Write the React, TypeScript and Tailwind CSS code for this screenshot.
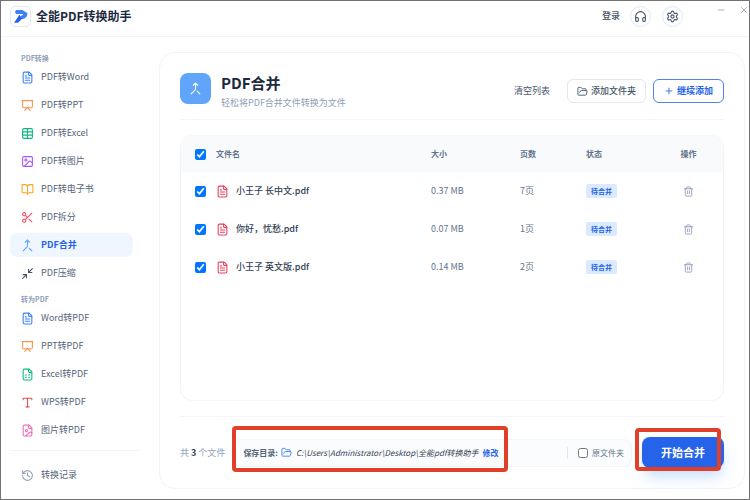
import {
  BookOpen,
  FileImage,
  FileSpreadsheet,
  FileText,
  FolderOpen,
  Headphones,
  History,
  Image as ImageIcon,
  Merge,
  Minimize2,
  Minus,
  Plus,
  Presentation,
  Scissors,
  Settings,
  Table,
  Trash2,
  Type,
  X,
  type LucideIcon,
} from 'lucide-react';

type NavItem = {
  label: string;
  icon: LucideIcon;
  color: string;
  active?: boolean;
};

const fromPdf: NavItem[] = [
  { label: 'PDF转Word', icon: FileText, color: 'text-[#3b82f6]' },
  { label: 'PDF转PPT', icon: Presentation, color: 'text-[#f59550]' },
  { label: 'PDF转Excel', icon: Table, color: 'text-[#10b981]' },
  { label: 'PDF转图片', icon: ImageIcon, color: 'text-[#a855f7]' },
  { label: 'PDF转电子书', icon: BookOpen, color: 'text-[#f5a623]' },
  { label: 'PDF拆分', icon: Scissors, color: 'text-[#f0546c]' },
  { label: 'PDF合并', icon: Merge, color: 'text-[#60a5fa]', active: true },
  { label: 'PDF压缩', icon: Minimize2, color: 'text-[#475569]' },
];

const toPdf: NavItem[] = [
  { label: 'Word转PDF', icon: FileText, color: 'text-[#3b82f6]' },
  { label: 'PPT转PDF', icon: Presentation, color: 'text-[#f59550]' },
  { label: 'Excel转PDF', icon: FileSpreadsheet, color: 'text-[#10b981]' },
  { label: 'WPS转PDF', icon: Type, color: 'text-[#e5534f]' },
  { label: '图片转PDF', icon: FileImage, color: 'text-[#ee6fb8]' },
];

const files = [
  { name: '小王子 长中文.pdf', size: '0.37 MB', pages: '7页' },
  { name: '你好，忧愁.pdf', size: '0.07 MB', pages: '1页' },
  { name: '小王子 英文版.pdf', size: '0.14 MB', pages: '2页' },
];

const Logo = () => (
  <span className="flex size-[21px] items-center justify-center rounded-[5px] border border-slate-200 bg-white">
    <svg viewBox="0 0 14 14" className="size-[15px]">
      <path d="M3 1H8.6L13.4 3.8C13.6 7.4 11.4 9.4 8.2 9.4H6.2L7.4 6.2C9 6.2 9.4 5.4 9.2 4.6H3.2C1.6 4.4 1.8 2 3 1Z" fill="#3b82f6" />
      <path d="M6 5.4L8.4 9.2L5.8 11.8C4.6 13 3 13 1 12.8Z" fill="#2563eb" />
    </svg>
  </span>
);

const NavLink = ({ item }: { item: NavItem }) => {
  const Icon = item.icon;
  return (
    <li>
      <a
        href="#"
        className={
          item.active
            ? 'flex h-6 items-center gap-[7px] rounded-lg bg-[#eff6ff] pl-[11px] font-bold text-[#2563eb]'
            : 'flex h-6 items-center gap-[7px] rounded-lg pl-[11px] text-[#56657a]'
        }
      >
        <Icon size={13} className={item.color} />
        <span>{item.label}</span>
      </a>
    </li>
  );
};

const Sidebar = () => (
  <nav className="flex w-[148px] shrink-0 flex-col pt-[15px] pr-[10px] pl-[9px] text-[9px]">
    <h2 className="pl-[11px] text-[7px] leading-3 font-bold text-slate-400">PDF转换</h2>
    <ul className="mt-px mr-[6px] flex flex-col gap-1">
      {fromPdf.map((item) => (
        <NavLink key={item.label} item={item} />
      ))}
    </ul>
    <h2 className="mt-2 pl-[11px] text-[7px] leading-3 font-bold text-slate-400">转为PDF</h2>
    <ul className="mt-px mr-[6px] flex flex-col gap-1">
      {toPdf.map((item) => (
        <NavLink key={item.label} item={item} />
      ))}
    </ul>
    <ul className="mt-2 border-t border-slate-100 pt-3">
      <NavLink item={{ label: '转换记录', icon: History, color: 'text-[#94a3b8]' }} />
    </ul>
  </nav>
);

const FileTable = () => (
  <div className="mt-[15px] flex-1 overflow-hidden rounded-xl border border-slate-100">
    <table className="w-full table-fixed text-left text-[9px]">
      <colgroup>
        <col className="w-[35px]" />
        <col />
        <col className="w-[89px]" />
        <col className="w-[66px]" />
        <col className="w-[68px]" />
        <col className="w-[69px]" />
      </colgroup>
      <thead>
        <tr className="h-9 bg-[#f8fafc] text-[8px] text-[#64748b]">
          <th className="pl-[14px]">
            <input type="checkbox" defaultChecked aria-label="全选" className="block size-[11px]" />
          </th>
          <th>文件名</th>
          <th>大小</th>
          <th>页数</th>
          <th>状态</th>
          <th className="text-center">操作</th>
        </tr>
      </thead>
      <tbody>
        {files.map((file) => (
          <tr key={file.name} className="h-[38px] text-[#64748b]">
            <td className="pl-[14px]">
              <input type="checkbox" defaultChecked aria-label={file.name} className="block size-[11px]" />
            </td>
            <td>
              <div className="flex items-center gap-[7px] font-medium text-[#334155]">
                <FileText size={13} className="text-[#e8405f]" />
                {file.name}
              </div>
            </td>
            <td>{file.size}</td>
            <td>{file.pages}</td>
            <td>
              <span className="inline-block rounded-[2px] bg-[#dbeafe] px-[5px] text-[7px] leading-[14px] font-bold text-[#2563eb]">
                待合并
              </span>
            </td>
            <td>
              <button type="button" aria-label="删除" className="mx-auto block text-[#94a3b8]">
                <Trash2 size={11} />
              </button>
            </td>
          </tr>
        ))}
      </tbody>
    </table>
  </div>
);

const Footer = () => (
  <div className="mt-[15px] flex items-center border-t border-slate-100 pt-5 text-[9px]">
    <p className="shrink-0 text-slate-400">
      共 <span className="font-bold text-slate-700">3</span> 个文件
    </p>
    <div className="ml-2 flex h-7 min-w-0 flex-1 items-center justify-between rounded-lg border border-slate-100 bg-slate-50/60 text-[8px]">
      <div className="relative flex h-full items-center pr-[7px] pl-[9px]">
        <span className="font-bold text-[#56657a]">保存目录:</span>
        <FolderOpen size={11} className="ml-[3px] text-[#3b82f6]" />
        <span className="ml-1 whitespace-nowrap text-[#334155] italic">
          C:\Users\Administrator\Desktop\全能pdf转换助手
        </span>
        <button type="button" className="ml-1 font-bold whitespace-nowrap text-[#2563eb]">
          修改
        </button>
        {/* Highlight frame */}
        <div className="pointer-events-none absolute -inset-x-[2px] -top-[14px] -bottom-[6px] rounded-sm border-4 border-[#e0402a]" />
      </div>
      <label className="flex items-center gap-1 border-l border-slate-200 pr-[7px] pl-[10px] whitespace-nowrap text-[#64748b]">
        <input type="checkbox" className="size-[10px]" />
        原文件夹
      </label>
    </div>
    <div className="relative ml-[10px] shrink-0">
      <button
        type="button"
        className="block h-[31px] rounded-lg bg-[#2563eb] px-[19px] text-[11px] font-bold text-white shadow-lg shadow-blue-200"
      >
        开始合并
      </button>
      {/* Highlight frame */}
      <div className="pointer-events-none absolute -top-[9px] right-[3px] -bottom-[3px] -left-[7px] rounded-sm border-4 border-[#e0402a]" />
    </div>
  </div>
);

const App = () => {
  return (
    <div className="flex min-h-screen flex-col border border-neutral-500 bg-white font-['Noto_Sans_CJK_SC',sans-serif] text-[#475569]">
      <header className="flex h-9 items-center border-b border-slate-100 pb-[5px] pl-[9px]">
        <Logo />
        <h1 className="ml-[5px] flex-1 text-[12px] font-bold text-slate-800">全能PDF转换助手</h1>
        <button type="button" className="text-[9px] font-medium">
          登录
        </button>
        <button type="button" aria-label="客服" className="ml-[10px] flex size-[21px] items-center justify-center rounded-full border border-slate-200">
          <Headphones size={13} />
        </button>
        <button type="button" aria-label="设置" className="ml-[11px] flex size-[21px] items-center justify-center rounded-full border border-slate-200">
          <Settings size={13} />
        </button>
        <div className="ml-[33px] flex gap-[13px] self-start pt-1 text-[#94a3b8]">
          <button type="button" aria-label="最小化">
            <Minus size={10} />
          </button>
          <button type="button" aria-label="关闭">
            <X size={10} />
          </button>
        </div>
      </header>

      <div className="flex flex-1">
        <Sidebar />
        <main className="mt-[15px] mr-1 mb-[10px] ml-[10px] flex min-w-0 flex-1 flex-col rounded-2xl border border-slate-100 px-5 pt-5 pb-5">
          {/* Page heading and actions */}
          <div className="flex items-start border-b border-slate-100 pb-[6px]">
            <span className="flex size-[31px] items-center justify-center rounded-lg bg-[#60a5fa] text-white">
              <Merge size={13} />
            </span>
            <div className="ml-[10px] flex-1">
              <h2 className="text-[15px] leading-5 font-bold text-slate-800">PDF合并</h2>
              <p className="text-[9px] leading-5 text-slate-400">轻松将PDF合并文件转换为文件</p>
            </div>
            <div className="flex items-center pt-[6px]">
              <button type="button" className="text-[9px]">
                清空列表
              </button>
              <button type="button" className="ml-[17px] flex h-6 items-center gap-[3px] rounded-md border border-slate-200 px-[9px] text-[9px] font-medium">
                <FolderOpen size={11} />
                添加文件夹
              </button>
              <button type="button" className="ml-[7px] flex h-6 items-center gap-[3px] rounded-md border border-[#4f83ee] px-[10px] text-[9px] font-bold text-[#2563eb]">
                <Plus size={10} />
                继续添加
              </button>
            </div>
          </div>
          <FileTable />
          <Footer />
        </main>
      </div>
    </div>
  );
};

export default App;
